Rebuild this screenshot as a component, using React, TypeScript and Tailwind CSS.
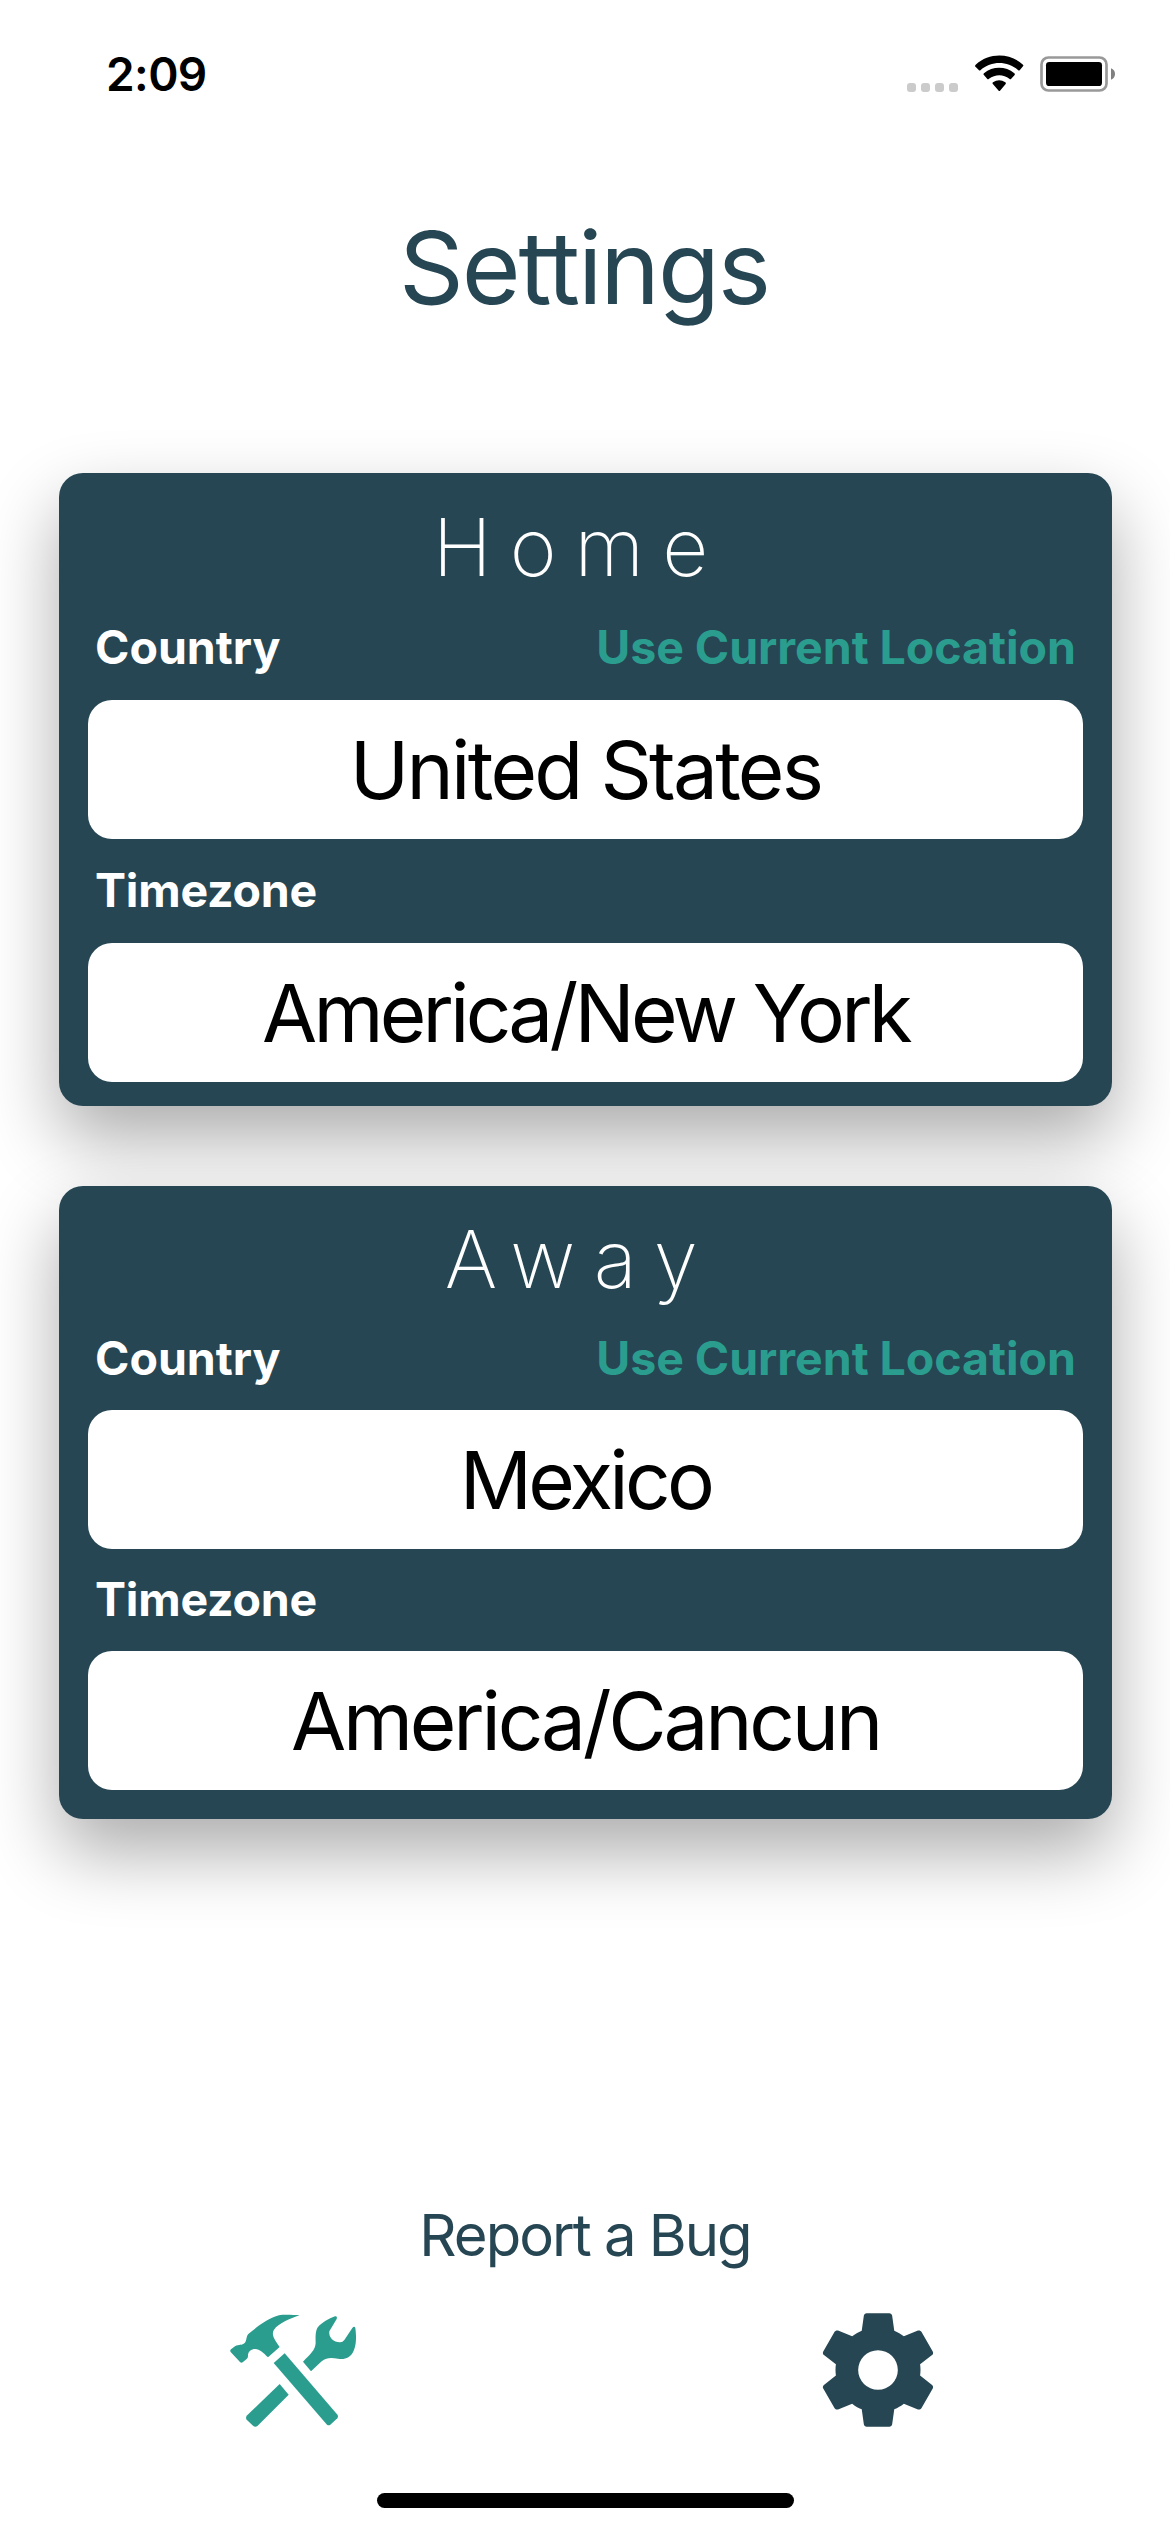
import React from 'react';

function StatusBar() {
  return (
    <div className="flex h-[141px] items-start justify-between pt-[50px] pr-[54px] pl-[106px]">
      <span className="text-[46px] leading-[48px] font-semibold tracking-[-0.6px] text-black">2:09</span>
      <div className="flex items-end pt-[5px]">
        <div className="mb-px flex gap-[5px]">
          <i className="size-[9px] rounded-[3px] bg-[#cbcbcb]" />
          <i className="size-[9px] rounded-[3px] bg-[#cbcbcb]" />
          <i className="size-[9px] rounded-[3px] bg-[#cbcbcb]" />
          <i className="size-[9px] rounded-[3px] bg-[#cbcbcb]" />
        </div>
        <svg className="mb-px ml-[16px]" width="50" height="37" viewBox="0 0 150 111">
          <path d="M3 34 Q3 31 5 29 C45 -8 107 -8 147 29 Q149 31 147 34 L137 46 Q135 48 132 45 C100 17 52 17 20 45 Q17 48 15 46 Z" />
          <path d="M29 59 Q27 57 30 55 C56 33 95 33 121 55 Q124 57 122 60 L111 72 Q109 74 106 71 C89 57 63 57 45 71 Q42 74 40 72 Z" />
          <path d="M56 86 Q54 84 57 82 C69 74 82 74 94 82 Q97 84 95 87 L78 107 Q76 109 74 107 Z" />
        </svg>
        <svg className="ml-[16px]" width="76" height="37" viewBox="0 0 228 111">
          <rect x="4.500" y="4.500" width="195" height="99" rx="21" fill="none" stroke="#999" strokeWidth="8" />
          <rect x="18" y="18" width="168" height="72" rx="10" />
          <path d="M213 37 Q225 42 225 54 Q225 66 213 71 Z" fill="#808080" />
        </svg>
      </div>
    </div>
  );
}

type CardProps = {
  title: string;
  country: string;
  timezone: string;
  titleClass: string;
  labelClass: string;
  zoneClass: string;
  countryTracking: string;
  timezoneTracking: string;
};

function Field({ value, tracking }: { value: string; tracking: string }) {
  return (
    <div className="h-[139px] rounded-[24px] bg-white text-center text-[80px] leading-[139px] text-black">
      <span className={tracking}>{value}</span>
    </div>
  );
}

function LocationCard(props: CardProps) {
  return (
    <section className="h-[633px] rounded-[24px] bg-[#264653] px-[29px] shadow-[0_33px_72px_rgba(0,0,0,0.33)]">
      <h2 className={props.titleClass}>{props.title}</h2>
      <div className={props.labelClass}>
        <span className="text-white">Country</span>
        <button className="tracking-[-0.040px] text-[#2a9d8f]">Use Current Location</button>
      </div>
      <Field value={props.country} tracking={props.countryTracking} />
      <div className={props.zoneClass}>Timezone</div>
      <Field value={props.timezone} tracking={props.timezoneTracking} />
    </section>
  );
}

function ToolsIcon() {
  return (
    <svg width="180" height="160" viewBox="0 0 540 480" fill="#2a9d8f">
      <path d="M299 76 C270 85 235 101 222 119 C213 133 223 148 239 171 L204 202 C190 188 179 178 166 177 C153 177 143 185 144 199 Q144 204 140 207 L128 217 Q124 220 120 216 L92 186 Q89 182 93 178 L106 168 C116 163 126 167 134 159 C141 151 138 139 145 132 C172 110 206 83 237 76 C253 73 280 75 299 76 Z" />
      <path d="M221 219 L254 190 L413 375 Q416 380 412 385 L391 404 Q386 408 381 404 Z" />
      <path d="M309 215 C330 193 346 181 347 159 C347 143 345 123 354 111 C366 98 386 86 405 79 Q413 78 410 87 L388 124 C385 144 403 158 421 157 Q428 157 433 150 L457 114 Q463 107 466 114 C469 137 470 163 461 182 C451 205 433 209 414 206 C396 203 380 201 365 214 L333 244 Z" />
      <path d="M239 282 L266 314 L173 407 Q166 413 160 408 L140 389 Q136 384 140 377 Z" />
    </svg>
  );
}

function CogIcon() {
  return (
    <svg width="136" height="136" viewBox="0 0 24 24" fill="#264653">
      <path d="M12,15.5A3.5,3.5 0 0,1 8.5,12A3.5,3.5 0 0,1 12,8.5A3.5,3.5 0 0,1 15.5,12A3.5,3.5 0 0,1 12,15.5M19.43,12.97C19.47,12.65 19.5,12.33 19.5,12C19.5,11.67 19.47,11.34 19.43,11L21.54,9.37C21.73,9.22 21.78,8.95 21.66,8.73L19.66,5.27C19.54,5.05 19.27,4.96 19.05,5.05L16.56,6.05C16.04,5.66 15.5,5.32 14.87,5.07L14.5,2.42C14.46,2.18 14.25,2 14,2H10C9.75,2 9.54,2.18 9.5,2.42L9.13,5.07C8.5,5.32 7.96,5.66 7.44,6.05L4.95,5.05C4.73,4.96 4.46,5.05 4.34,5.27L2.34,8.73C2.21,8.95 2.27,9.22 2.46,9.37L4.57,11C4.53,11.34 4.5,11.67 4.5,12C4.5,12.33 4.53,12.65 4.57,12.97L2.46,14.63C2.27,14.78 2.21,15.05 2.34,15.27L4.34,18.73C4.46,18.95 4.73,19.03 4.95,18.95L7.44,17.94C7.96,18.34 8.5,18.68 9.13,18.93L9.5,21.58C9.54,21.82 9.75,22 10,22H14C14.25,22 14.46,21.82 14.5,21.58L14.87,18.93C15.5,18.67 16.04,18.34 16.56,17.94L19.05,18.95C19.27,19.03 19.54,18.95 19.66,18.73L21.66,15.27C21.78,15.05 21.73,14.78 21.54,14.63L19.43,12.97Z" />
    </svg>
  );
}

export default function App() {
  return (
    <div className="flex h-[2532px] w-[1170px] flex-col overflow-hidden bg-white font-['Inter',sans-serif]">
      <StatusBar />
      <h1 className="mt-[66px] pr-[2px] text-center text-[101px] leading-[120px] tracking-[-2.100px] text-[#264653]">Settings</h1>
      <main className="mt-[146px] flex flex-col gap-[80px] pr-[58px] pl-[59px]">
        <LocationCard
          title="Home"
          country="United States"
          timezone="America/New York"
          titleClass="pt-[26px] pr-[12px] text-center text-[80px] leading-[96px] font-extralight tracking-[18px] text-white"
          labelClass="mt-[24px] mb-[25px] flex justify-between px-[7px] text-[46.500px] leading-[56px] font-bold"
          zoneClass="mt-[23px] mb-[25px] px-[7px] text-[46.500px] leading-[56px] font-bold tracking-[-0.200px] text-white"
          countryTracking="tracking-[-2.700px]"
          timezoneTracking="tracking-[-3.800px]"
        />
        <LocationCard
          title="Away"
          country="Mexico"
          timezone="America/Cancun"
          titleClass="pt-[25px] pr-[10px] text-center text-[80px] leading-[96px] font-extralight tracking-[18.500px] text-white"
          labelClass="mt-[23px] mb-[24px] flex justify-between px-[7px] text-[46.500px] leading-[56px] font-bold"
          zoneClass="mt-[22px] mb-[24px] px-[7px] text-[46.500px] leading-[56px] font-bold tracking-[-0.200px] text-white"
          countryTracking="tracking-[-3.700px]"
          timezoneTracking="tracking-[-3.200px]"
        />
      </main>
      <footer className="mt-auto flex h-[332px] flex-col items-center">
        <a className="text-[58px] leading-[70px] tracking-[-2px] text-[#264653]">Report a Bug</a>
        <nav className="mt-[20px] grid w-full grid-cols-2">
          <div className="flex h-[160px] pl-[200px]">
            <ToolsIcon />
          </div>
          <div className="flex h-[160px] items-center justify-center">
            <CogIcon />
          </div>
        </nav>
        <div className="mt-[43px] ml-px h-[15px] w-[417px] rounded-full bg-black" />
      </footer>
    </div>
  );
}
